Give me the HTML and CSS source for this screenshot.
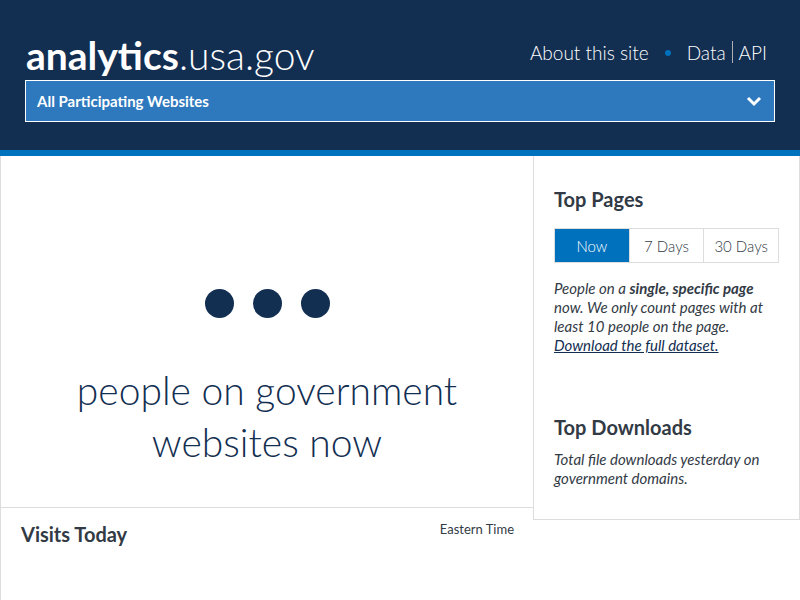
FILE: index.html
```html
<!DOCTYPE html>
<html>
<head>
<meta charset="utf-8">
<link rel="stylesheet" href="styles.css">
</head>
<body>
<header class="header">
  <div class="header-top">
    <h1 class="logo"><span class="logo-bold">analytics</span>.usa.gov</h1>
    <nav class="nav">
      <a class="nav-link">About this site</a>
      <span class="nav-dot"></span>
      <a class="nav-link">Data</a><span class="nav-sep"></span><a class="nav-link">API</a>
    </nav>
  </div>
  <div class="select">
    <span class="select-text">All Participating Websites</span>
    <svg class="chevron" width="16" height="12" viewBox="0 0 16 12"><path d="M2 3 L8 9 L14 3" fill="none" stroke="#fff" stroke-width="3"/></svg>
  </div>
</header>
<div class="stripe"></div>
<main class="main">
  <div class="left">
    <section class="realtime">
      <div class="dots"><span class="dot"></span><span class="dot"></span><span class="dot"></span></div>
      <p class="realtime-text">people on government<br>websites now</p>
    </section>
    <section class="visits">
      <h2 class="section-title">Visits Today</h2>
      <span class="tz">Eastern Time</span>
    </section>
  </div>
  <aside class="sidebar">
    <h2 class="section-title">Top Pages</h2>
    <div class="tabs">
      <span class="tab tab-active">Now</span>
      <span class="tab">7 Days</span>
      <span class="tab">30 Days</span>
    </div>
    <p class="desc">People on a <strong>single, specific page</strong> now. We only count pages with at least 10 people on the page. <a class="desc-link">Download the full dataset.</a></p>
    <h2 class="section-title downloads-title">Top Downloads</h2>
    <p class="desc">Total file downloads yesterday on government domains.</p>
  </aside>
</main>
</body>
</html>
```

FILE: styles.css
```css
* { box-sizing: border-box; }
body {
  margin: 0;
  font-family: "Lato", "Open Sans", sans-serif;
  color: #323a45;
  background: #fff;
}
.header {
  background: #122e51;
  padding: 30px 25px 28px;
  height: 150px;
}
.header-top {
  display: flex;
  justify-content: space-between;
  align-items: center;
  height: 50px;
}
.logo {
  margin: 0;
  font-size: 39px;
  font-weight: 300;
  color: #fff;
  letter-spacing: 0;
  padding-left: 1px;
}
.logo-bold { font-weight: 700; }
.nav {
  display: flex;
  align-items: center;
  color: #fff;
  font-size: 19px;
  font-weight: 300;
  padding-right: 8px;
  margin-bottom: 6px;
}
.nav-link { color: #fff; }
.nav-dot {
  width: 6px;
  height: 6px;
  border-radius: 50%;
  background: #0071bc;
  margin: 2px 16px 0 16px;
}
.nav-sep {
  width: 1px;
  height: 22px;
  background: #aeb0b5;
  margin: 0 6px;
}
.select {
  height: 42px;
  background: #2e78bd;
  border: 1px solid #fff;
  display: flex;
  align-items: center;
  justify-content: space-between;
  padding: 0 12px 0 11px;
}
.select-text {
  color: #fff;
  font-size: 15px;
  font-weight: 700;
}
.chevron { display: block; }
.stripe {
  height: 6px;
  background: #0071bc;
}
.main {
  display: flex;
  align-items: flex-start;
}
.left {
  flex: 1;
  border-left: 1px solid #ddd;
  height: 444px;
}
.realtime {
  height: 352px;
  border-bottom: 1px solid #ddd;
  display: flex;
  flex-direction: column;
  align-items: center;
  padding-top: 133px;
}
.dots {
  display: flex;
  gap: 19px;
}
.dot {
  width: 29px;
  height: 29px;
  border-radius: 50%;
  background: #122e51;
}
.realtime-text {
  margin: 46px 0 0;
  text-align: center;
  font-size: 39px;
  line-height: 52px;
  font-weight: 300;
  color: #122e51;
}
.visits {
  display: flex;
  justify-content: space-between;
  align-items: flex-start;
  padding: 14px 19px 0 20px;
}
.section-title {
  margin: 0;
  font-size: 20px;
  font-weight: 700;
  color: #323a45;
}
.tz {
  font-size: 13px;
  margin-top: -1px;
}
.sidebar {
  width: 267px;
  height: 364px;
  border: 1px solid #ddd;
  border-top: 0;
  padding: 31px 20px 0 20px;
}
.tabs {
  display: flex;
  margin-top: 17px;
  width: 225px;
  border: 1px solid #ddd;
  height: 35px;
}
.tab {
  flex: 1;
  display: flex;
  align-items: center;
  justify-content: center;
  font-size: 15px;
  font-weight: 300;
  color: #323a45;
  border-left: 1px solid #ddd;
}
.tab:first-child { border-left: 0; }
.tab-active {
  background: #0071bc;
  color: #fff;
}
.desc {
  margin: 16px 0 0;
  font-size: 15px;
  line-height: 19px;
  font-style: italic;
  color: #323a45;
}
.desc strong { font-weight: 700; }
.desc-link {
  color: #122e51;
  text-decoration: underline;
}
.downloads-title { margin-top: 60px; }
.downloads-title + .desc { margin-top: 11px; }
```
